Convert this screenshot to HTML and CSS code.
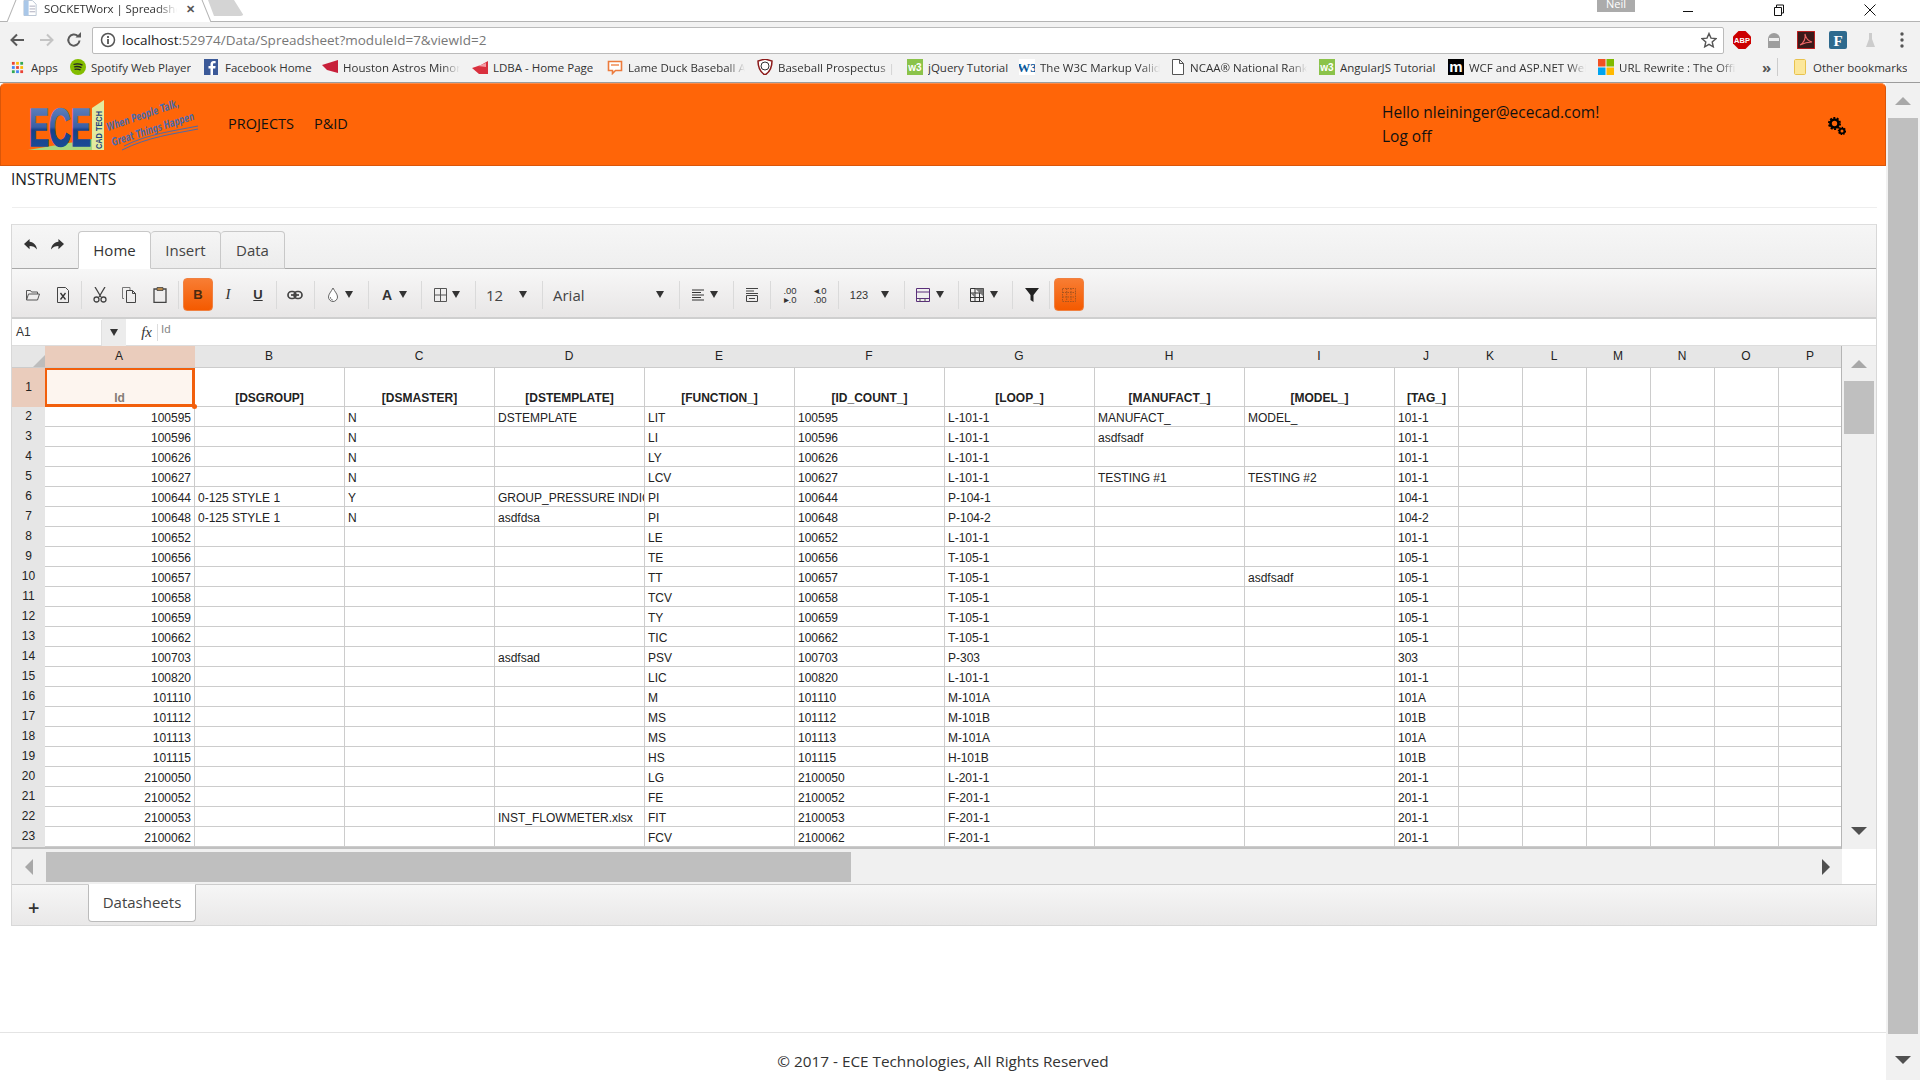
FILE: index.html
```html
<!DOCTYPE html>
<html lang="en">
<head>
<meta charset="utf-8">
<title>SOCKETWorx | Spreadsheet</title>
<link rel="stylesheet" href="styles.css">
</head>
<body>
<div class="tabstrip">
  <div class="btab">
    <svg class="ic16" viewBox="0 0 16 16"><path d="M1 0h9l4 4v12H1z" fill="#fff" stroke="#b9c4d2"/><path d="M1 0h5v16H1z" fill="#a9c7e8"/><path d="M7 6h6M7 9h6M7 12h6" stroke="#aab"/></svg>
    <span class="btab-title">SOCKETWorx | Spreadsheet</span>
    <span class="btab-x">✕</span>
  </div>
  <div class="newtab"></div>
  <div class="neil">Neil</div>
  <div class="winbtns">
    <svg class="win" viewBox="0 0 12 12"><path d="M1 7.500h10" stroke="#111"/></svg>
    <svg class="win" viewBox="0 0 12 12"><path d="M1.500 3.500h7v8h-7zM3.500 3.500v-2.500h7v8h-2" fill="none" stroke="#111"/></svg>
    <svg class="win" viewBox="0 0 12 12"><path d="M.5.5l11 11M11.500.5l-11 11" stroke="#111"/></svg>
  </div>
</div>
<div class="toolbar">
  <div class="navs">
    <svg class="nav" viewBox="0 0 16 16"><path d="M15 8H3M8 2.500L2.500 8 8 13.500" fill="none" stroke="#5a5a5a" stroke-width="2"/></svg>
    <svg class="nav" viewBox="0 0 16 16"><path d="M1 8h12M8 2.500L13.500 8 8 13.500" fill="none" stroke="#c4c4c4" stroke-width="2"/></svg>
    <svg class="nav nav-r" viewBox="0 0 16 16"><path d="M13.500 8.500A5.600 5.600 0 1 1 11.800 4" fill="none" stroke="#5a5a5a" stroke-width="2"/><path d="M9.500 5.500h5.500V0z" fill="#5a5a5a"/></svg>
  </div>
  <div class="omnibox">
    <svg class="ic16" viewBox="0 0 16 16"><circle cx="8" cy="8" r="6.500" fill="none" stroke="#555" stroke-width="1.500"/><path d="M8 7v5M8 4v2" stroke="#555" stroke-width="1.800"/></svg>
    <span class="url"><b class="host">localhost</b>:52974/Data/Spreadsheet?moduleId=7&amp;viewId=2</span>
    <svg class="ic16 star" viewBox="0 0 16 16"><path d="M8 1.500l2 4.600 5 .5-3.800 3.300 1.100 4.900L8 12.300l-4.300 2.500 1.100-4.900L1 6.600l5-.5z" fill="none" stroke="#555" stroke-width="1.400"/></svg>
  </div>
  <div class="exts">
    <svg class="ext" viewBox="0 0 18 18"><path d="M5.500 0h7L18 5.500v7L12.500 18h-7L0 12.500v-7z" fill="#c00"/><text class="t-abp" x="9" y="11.800">ABP</text></svg>
    <svg class="ext" viewBox="0 0 18 18"><path d="M3 8a6 6 0 0 1 12 0v9H3z" fill="#9d9d9d"/><path d="M4 7h10v3H4z" fill="#eee"/></svg>
    <svg class="ext" viewBox="0 0 18 18"><path d="M0 0h18v18H0z" fill="#3b1a1a" stroke="#d22" stroke-width="1.500"/><path d="M3 14c4-2 6-7 5-11 1 5 3 7 7 8-5 0-8 1-12 3z" fill="none" stroke="#e66" stroke-width="1.200"/></svg>
    <svg class="ext" viewBox="0 0 18 18"><rect width="18" height="18" rx="2" fill="#2e6a8e"/><text class="t-f" x="9" y="15">F</text></svg>
    <svg class="ext" viewBox="0 0 18 18"><path d="M8 2h3v6l3 8H5l3-8z" fill="#ccc"/></svg>
    <svg class="ext" viewBox="0 0 18 18"><circle cx="9" cy="3" r="1.700" fill="#555"/><circle cx="9" cy="9" r="1.700" fill="#555"/><circle cx="9" cy="15" r="1.700" fill="#555"/></svg>
  </div>
</div>
<div class="bookmarks">
  <a class="bm bm-apps"><svg class="fav" viewBox="0 0 14 14"><path d="M1 1h3v3H1z" fill="#ea4335"/><path d="M5.500 1h3v3h-3z" fill="#fbbc05"/><path d="M10 1h3v3h-3z" fill="#34a853"/><path d="M1 5.500h3v3H1z" fill="#4285f4"/><path d="M5.500 5.500h3v3h-3z" fill="#ea4335"/><path d="M10 5.500h3v3h-3z" fill="#fbbc05"/><path d="M1 10h3v3H1z" fill="#34a853"/><path d="M5.500 10h3v3h-3z" fill="#4285f4"/><path d="M10 10h3v3h-3z" fill="#ea4335"/></svg><span class="bm-t">Apps</span></a>
  <a class="bm bm-spot"><svg class="fav" viewBox="0 0 16 16"><circle cx="8" cy="8" r="8" fill="#84bd00"/><path d="M3.500 5.500c3-1 6-.8 9 .7M4 8c2.500-.8 5-.6 7.500.6M4.500 10.400c2-.6 4-.4 6 .5" fill="none" stroke="#222" stroke-width="1.300"/></svg><span class="bm-t">Spotify Web Player</span></a>
  <a class="bm bm-fb"><svg class="fav" viewBox="0 0 16 16"><path d="M0 0h14v16H0z" fill="#3b5998"/><path d="M9 16V9.500h2.300l.3-2.500H9V5.500c0-.8.300-1.200 1.300-1.200h1.300V2h-2C7.500 2 6.500 3.300 6.500 5.200V7H4.500v2.500h2V16z" fill="#fff"/></svg><span class="bm-t">Facebook Home</span></a>
  <a class="bm bm-astros"><svg class="fav" viewBox="0 0 16 16"><path d="M0 6l16-5v13L5 11z" fill="#c8203a"/></svg><span class="bm-t fade">Houston Astros Minor</span></a>
  <a class="bm bm-ldba"><svg class="fav" viewBox="0 0 16 16"><path d="M0 9l9-3 7-4v13H7z" fill="#d9303e"/><path d="M6 7l8-3v4z" fill="#f59ca4"/></svg><span class="bm-t">LDBA - Home Page</span></a>
  <a class="bm bm-duck"><svg class="fav" viewBox="0 0 16 16"><path d="M1.500 2.500h13v9h-6l-3 3v-3h-4z" fill="#fff" stroke="#ec7b3c" stroke-width="1.600"/><path d="M4 6h8" stroke="#ec7b3c" stroke-width="1.300"/></svg><span class="bm-t fade">Lame Duck Baseball Association</span></a>
  <a class="bm bm-bp"><svg class="fav" viewBox="0 0 16 16"><path d="M8 0l7 2c0 7-2 11-7 14C3 13 1 9 1 2z" fill="#fff" stroke="#8b1a1a" stroke-width="1.500"/><circle cx="8" cy="7" r="4" fill="none" stroke="#333"/></svg><span class="bm-t fade">Baseball Prospectus | Baseball</span></a>
  <a class="bm bm-jq"><svg class="fav" viewBox="0 0 16 16"><path d="M0 0h16v16H0z" fill="#8bc34a"/><text class="t-w3" x="8" y="12">w3</text></svg><span class="bm-t">jQuery Tutorial</span></a>
  <a class="bm bm-w3"><svg class="fav" viewBox="0 0 16 16"><path d="M0 0h16v16H0z" fill="#fff"/><text class="t-w3c" x="8" y="13">W3</text></svg><span class="bm-t fade">The W3C Markup Validation</span></a>
  <a class="bm bm-ncaa"><svg class="fav-s" viewBox="0 0 12 16"><path d="M.5.500h7l4 4v11H.5zM7.500.500v4h4" fill="#fff" stroke="#555"/></svg><span class="bm-t fade">NCAA® National Rankings Index</span></a>
  <a class="bm bm-ang"><svg class="fav" viewBox="0 0 16 16"><path d="M0 0h16v16H0z" fill="#8bc34a"/><text class="t-w3" x="8" y="12">w3</text></svg><span class="bm-t">AngularJS Tutorial</span></a>
  <a class="bm bm-wcf"><svg class="fav" viewBox="0 0 16 16"><path d="M0 0h16v16H0z" fill="#000"/><text class="t-m" x="8" y="13">m</text></svg><span class="bm-t fade">WCF and ASP.NET Web API</span></a>
  <a class="bm bm-url"><svg class="fav" viewBox="0 0 16 16"><path d="M0 0h7.500v7.500H0z" fill="#f25022"/><path d="M8.500 0H16v7.500H8.500z" fill="#7fba00"/><path d="M0 8.500h7.500V16H0z" fill="#00a4ef"/><path d="M8.500 8.500H16V16H8.500z" fill="#ffb900"/></svg><span class="bm-t fade">URL Rewrite : The Official</span></a>
  <span class="bm-more">»</span>
  <span class="bm-sep"></span>
  <a class="bm bm-other"><svg class="fav-s" viewBox="0 0 12 16"><path d="M.5 1.500C.5 1 1 .5 1.500.5h9c.5 0 1 .5 1 1v13c0 .5-.5 1-1 1h-9c-.5 0-1-.5-1-1z" fill="#fce79a" stroke="#e8c24e"/></svg><span class="bm-t">Other bookmarks</span></a>
</div>

<div class="viewport">
  <div class="page">
    <header class="appbar">
      <svg class="logo" viewBox="0 0 172 52">
        <defs><linearGradient id="ece" x1="0" y1="0" x2="0" y2="1"><stop offset="0" stop-color="#6f8fc6"/><stop offset=".5" stop-color="#3a5fa6"/><stop offset=".55" stop-color="#14418c"/><stop offset="1" stop-color="#1f4f9a"/></linearGradient></defs>
        <path d="M0 51L64 40v11z" fill="#a9d67e"/>
        <path d="M64 51V9L76 1v50z" fill="#e2eb9f"/>
        <text class="logo-ece" x="1" y="47" textLength="62" lengthAdjust="spacingAndGlyphs" fill="url(#ece)" stroke="url(#ece)">ECE</text>
        <text class="logo-cad" transform="translate(74 50) rotate(-90)" textLength="38" lengthAdjust="spacingAndGlyphs">CAD TECH</text>
        <text class="logo-tag" transform="translate(80 32) rotate(-19)" textLength="76" lengthAdjust="spacingAndGlyphs">When People Talk,</text>
        <text class="logo-tag" transform="translate(85 47) rotate(-18)" textLength="86" lengthAdjust="spacingAndGlyphs">Great Things Happen</text>
        <path d="M94 51C120 38 145 35 170 30M96 47C120 35 145 32 170 27" fill="none" stroke="#4d6aa8" stroke-width="1"/>
      </svg>
      <nav class="appnav"><a>PROJECTS</a><a>P&amp;ID</a></nav>
      <div class="user"><div>Hello nleininger@ececad.com!</div><div>Log off</div></div>
      <svg class="gears" viewBox="0 0 18 18">
        <circle cx="6.500" cy="6.500" r="4" fill="none" stroke="#000" stroke-width="2.600"/>
        <circle cx="6.500" cy="6.500" r="5.600" fill="none" stroke="#000" stroke-width="1.800" stroke-dasharray="2 1.500"/>
        <circle cx="14" cy="14" r="2.400" fill="none" stroke="#000" stroke-width="1.800"/>
        <circle cx="14" cy="14" r="3.600" fill="none" stroke="#000" stroke-width="1.300" stroke-dasharray="1.500 1.200"/>
      </svg>
    </header>
    <main class="content">
      <h1 class="title">INSTRUMENTS</h1>
      <div class="rule"></div>
      <section class="sheet">
        <div class="rtabs">
          <svg class="ur" viewBox="0 0 16 14"><path d="M7 1L1 6.500 7 12V8.500c3.500 0 6 1 8 4-.5-5-3.500-8-8-8.500z" fill="#333"/></svg>
          <svg class="ur" viewBox="0 0 16 14"><path d="M9 1l6 5.500L9 12V8.500c-3.500 0-6 1-8 4 .5-5 3.500-8 8-8.500z" fill="#333"/></svg>
          <a class="rtab on">Home</a><a class="rtab">Insert</a><a class="rtab">Data</a>
        </div>
        <div class="ribbon">
          <div class="grp">
            <span class="ti"><svg class="i" viewBox="0 0 16 16"><path d="M1.500 13V3.500h4l1 1.500h6v2M1.500 13l2-6h11l-2 6z" fill="none" stroke="#555"/></svg></span>
            <span class="ti"><svg class="i" viewBox="0 0 16 16"><path d="M2.500.5h8l3 3v12h-11z" fill="none" stroke="#444"/><path d="M5.500 6l5 6.500M10.500 6l-5 6.500" stroke="#333" stroke-width="1.300"/></svg></span>
          </div>
          <div class="grp">
            <span class="ti"><svg class="i" viewBox="0 0 16 16"><path d="M3 0l6 10M13 0L7 10" stroke="#444" stroke-width="1.300"/><circle cx="4.500" cy="12.500" r="2.500" fill="none" stroke="#444" stroke-width="1.300"/><circle cx="11.500" cy="12.500" r="2.500" fill="none" stroke="#444" stroke-width="1.300"/></svg></span>
            <span class="ti"><svg class="i" viewBox="0 0 16 16"><path d="M2 11.500H.5V.5H8V3" fill="none" stroke="#777"/><path d="M4.500 3.500h6l3 3v9h-9zM10.500 3.500v3h3" fill="none" stroke="#444"/></svg></span>
            <span class="ti"><svg class="i" viewBox="0 0 16 16"><path d="M5 2H2v13.500h12V2h-3" fill="none" stroke="#444" stroke-width="1.300"/><path d="M5 .5h6v3H5z" fill="#b98a4a" stroke="#444" stroke-width=".8"/></svg></span>
          </div>
          <div class="grp bold-grp">
            <span class="ti"><span class="obtn fmt-b">B</span></span>
            <span class="ti fmt-i">I</span>
            <span class="ti fmt-u">U</span>
          </div>
          <div class="grp link-grp">
            <span class="ti"><svg class="i" viewBox="0 0 16 16"><rect x="1" y="4.500" width="8" height="7" rx="3.500" fill="none" stroke="#444" stroke-width="1.700"/><rect x="7" y="4.500" width="8" height="7" rx="3.500" fill="none" stroke="#444" stroke-width="1.700"/><path d="M4 8h8" stroke="#444" stroke-width="1.700"/></svg></span>
          </div>
          <div class="grp dd g-fill"><svg class="i" viewBox="0 0 16 16"><path d="M8 1c-2 4-4.500 6-4.500 9a4.500 4.500 0 0 0 9 0C12.500 7 10 5 8 1z" fill="#fff" stroke="#666"/><path d="M5.500 10a2.500 2.500 0 0 0 2.500 3" fill="none" stroke="#888"/></svg><i class="caret"></i></div>
          <div class="grp dd g-a"><span class="fmt-a">A</span><i class="caret"></i></div>
          <div class="grp dd g-b"><svg class="i" viewBox="0 0 16 16"><path d="M2.500 1.500h12v13h-12zM8.500 1.500v13M2.500 8h12" fill="none" stroke="#555"/></svg><i class="caret"></i></div>
          <div class="grp dd g-size"><span class="fs">12</span><i class="caret"></i></div>
          <div class="grp dd g-font"><span class="ff">Arial</span><i class="caret"></i></div>
          <div class="grp dd g-al"><svg class="i" viewBox="0 0 16 16"><path d="M2 3h12M2 5.500h9M2 8h12M2 10.500h9M2 13h12" stroke="#333"/></svg><i class="caret"></i></div>
          <div class="grp g-one"><svg class="i" viewBox="0 0 16 16"><path d="M2 1.500h12M2 4h8M2 6.500h12" stroke="#444"/><path d="M2.500 8.500h11v6h-11zM5 11.500h6" fill="none" stroke="#444"/></svg></div>
          <div class="grp g-dec">
            <span class="ti"><span class="dec"><span>.00</span><span>▸.0</span></span></span>
            <span class="ti"><span class="dec"><span>◂.0</span><span>.00</span></span></span>
          </div>
          <div class="grp dd g-num"><span class="num">123</span><i class="caret"></i></div>
          <div class="grp dd g-f1"><svg class="i" viewBox="0 0 16 16"><path d="M1.500 1.500h13v13h-13zM1.500 5h13M1.500 11.500h13" fill="none" stroke="#5a2f7a"/><path d="M5 11.500V14.500M10 11.500v3" stroke="#555"/></svg><i class="caret"></i></div>
          <div class="grp dd g-f2"><svg class="i" viewBox="0 0 16 16"><path d="M1.500 1.500h13v13h-13zM1.500 6h13M1.500 10.500h13M6 1.500v13M10.500 1.500v13" fill="none" stroke="#333"/><path d="M6 1.500l8.500 8v-8zM1.500 6l4.500 4.500v-4.500z" fill="#777"/></svg><i class="caret"></i></div>
          <div class="grp g-filter"><svg class="i" viewBox="0 0 16 16"><path d="M1 1h14L9.500 8v7l-3-2V8z" fill="#222"/></svg></div>
          <span class="obtn"><svg class="i" viewBox="0 0 16 16"><path d="M1.500 1.500h13v13h-13zM1.500 5.500h13M1.500 10h13M5.700 1.500v13M10 1.500v13" fill="none" stroke="#a8541e" stroke-dasharray="1.500 1"/></svg></span>
        </div>
        <div class="formula">
          <div class="namebox">A1</div>
          <div class="namedd"><i class="caret"></i></div>
          <div class="fx">fx</div>
          <div class="fval">Id</div>
        </div>
        <div class="gridarea">
          <div class="gridview">
            <table class="grid">
              <colgroup><col class="c-r"><col class="c-w"><col class="c-w"><col class="c-w"><col class="c-w"><col class="c-w"><col class="c-w"><col class="c-w"><col class="c-w"><col class="c-w"><col class="c-n"><col class="c-n"><col class="c-n"><col class="c-n"><col class="c-n"><col class="c-n"><col class="c-n"></colgroup>
              <thead><tr><th class="corner"><i class="tri"></i></th><th class="sel">A</th><th>B</th><th>C</th><th>D</th><th>E</th><th>F</th><th>G</th><th>H</th><th>I</th><th>J</th><th>K</th><th>L</th><th>M</th><th>N</th><th>O</th><th>P</th></tr></thead>
              <tbody>
                <tr class="head"><th class="sel">1</th><td class="a1">Id</td><td>[DSGROUP]</td><td>[DSMASTER]</td><td>[DSTEMPLATE]</td><td>[FUNCTION_]</td><td>[ID_COUNT_]</td><td>[LOOP_]</td><td>[MANUFACT_]</td><td>[MODEL_]</td><td>[TAG_]</td><td></td><td></td><td></td><td></td><td></td><td></td></tr>
                <tr><th>2</th><td>100595</td><td></td><td>N</td><td>DSTEMPLATE</td><td>LIT</td><td>100595</td><td>L-101-1</td><td>MANUFACT_</td><td>MODEL_</td><td>101-1</td><td></td><td></td><td></td><td></td><td></td><td></td></tr>
                <tr><th>3</th><td>100596</td><td></td><td>N</td><td></td><td>LI</td><td>100596</td><td>L-101-1</td><td>asdfsadf</td><td></td><td>101-1</td><td></td><td></td><td></td><td></td><td></td><td></td></tr>
                <tr><th>4</th><td>100626</td><td></td><td>N</td><td></td><td>LY</td><td>100626</td><td>L-101-1</td><td></td><td></td><td>101-1</td><td></td><td></td><td></td><td></td><td></td><td></td></tr>
                <tr><th>5</th><td>100627</td><td></td><td>N</td><td></td><td>LCV</td><td>100627</td><td>L-101-1</td><td>TESTING #1</td><td>TESTING #2</td><td>101-1</td><td></td><td></td><td></td><td></td><td></td><td></td></tr>
                <tr><th>6</th><td>100644</td><td>0-125 STYLE 1</td><td>Y</td><td>GROUP_PRESSURE INDICATOR</td><td>PI</td><td>100644</td><td>P-104-1</td><td></td><td></td><td>104-1</td><td></td><td></td><td></td><td></td><td></td><td></td></tr>
                <tr><th>7</th><td>100648</td><td>0-125 STYLE 1</td><td>N</td><td>asdfdsa</td><td>PI</td><td>100648</td><td>P-104-2</td><td></td><td></td><td>104-2</td><td></td><td></td><td></td><td></td><td></td><td></td></tr>
                <tr><th>8</th><td>100652</td><td></td><td></td><td></td><td>LE</td><td>100652</td><td>L-101-1</td><td></td><td></td><td>101-1</td><td></td><td></td><td></td><td></td><td></td><td></td></tr>
                <tr><th>9</th><td>100656</td><td></td><td></td><td></td><td>TE</td><td>100656</td><td>T-105-1</td><td></td><td></td><td>105-1</td><td></td><td></td><td></td><td></td><td></td><td></td></tr>
                <tr><th>10</th><td>100657</td><td></td><td></td><td></td><td>TT</td><td>100657</td><td>T-105-1</td><td></td><td>asdfsadf</td><td>105-1</td><td></td><td></td><td></td><td></td><td></td><td></td></tr>
                <tr><th>11</th><td>100658</td><td></td><td></td><td></td><td>TCV</td><td>100658</td><td>T-105-1</td><td></td><td></td><td>105-1</td><td></td><td></td><td></td><td></td><td></td><td></td></tr>
                <tr><th>12</th><td>100659</td><td></td><td></td><td></td><td>TY</td><td>100659</td><td>T-105-1</td><td></td><td></td><td>105-1</td><td></td><td></td><td></td><td></td><td></td><td></td></tr>
                <tr><th>13</th><td>100662</td><td></td><td></td><td></td><td>TIC</td><td>100662</td><td>T-105-1</td><td></td><td></td><td>105-1</td><td></td><td></td><td></td><td></td><td></td><td></td></tr>
                <tr><th>14</th><td>100703</td><td></td><td></td><td>asdfsad</td><td>PSV</td><td>100703</td><td>P-303</td><td></td><td></td><td>303</td><td></td><td></td><td></td><td></td><td></td><td></td></tr>
                <tr><th>15</th><td>100820</td><td></td><td></td><td></td><td>LIC</td><td>100820</td><td>L-101-1</td><td></td><td></td><td>101-1</td><td></td><td></td><td></td><td></td><td></td><td></td></tr>
                <tr><th>16</th><td>101110</td><td></td><td></td><td></td><td>M</td><td>101110</td><td>M-101A</td><td></td><td></td><td>101A</td><td></td><td></td><td></td><td></td><td></td><td></td></tr>
                <tr><th>17</th><td>101112</td><td></td><td></td><td></td><td>MS</td><td>101112</td><td>M-101B</td><td></td><td></td><td>101B</td><td></td><td></td><td></td><td></td><td></td><td></td></tr>
                <tr><th>18</th><td>101113</td><td></td><td></td><td></td><td>MS</td><td>101113</td><td>M-101A</td><td></td><td></td><td>101A</td><td></td><td></td><td></td><td></td><td></td><td></td></tr>
                <tr><th>19</th><td>101115</td><td></td><td></td><td></td><td>HS</td><td>101115</td><td>H-101B</td><td></td><td></td><td>101B</td><td></td><td></td><td></td><td></td><td></td><td></td></tr>
                <tr><th>20</th><td>2100050</td><td></td><td></td><td></td><td>LG</td><td>2100050</td><td>L-201-1</td><td></td><td></td><td>201-1</td><td></td><td></td><td></td><td></td><td></td><td></td></tr>
                <tr><th>21</th><td>2100052</td><td></td><td></td><td></td><td>FE</td><td>2100052</td><td>F-201-1</td><td></td><td></td><td>201-1</td><td></td><td></td><td></td><td></td><td></td><td></td></tr>
                <tr><th>22</th><td>2100053</td><td></td><td></td><td>INST_FLOWMETER.xlsx</td><td>FIT</td><td>2100053</td><td>F-201-1</td><td></td><td></td><td>201-1</td><td></td><td></td><td></td><td></td><td></td><td></td></tr>
                <tr><th>23</th><td>2100062</td><td></td><td></td><td></td><td>FCV</td><td>2100062</td><td>F-201-1</td><td></td><td></td><td>201-1</td><td></td><td></td><td></td><td></td><td></td><td></td></tr>
                <tr><th></th><td></td><td></td><td></td><td></td><td></td><td></td><td></td><td></td><td></td><td></td><td></td><td></td><td></td><td></td><td></td><td></td></tr>
              </tbody>
            </table>
          </div>
          <div class="vscroll">
            <i class="arr up"></i>
            <div class="vthumb"></div>
            <i class="arr down"></i>
          </div>
        </div>
        <div class="hrow">
          <div class="hscroll">
            <i class="arr left"></i>
            <div class="hthumb"></div>
            <i class="arr right"></i>
          </div>
        </div>
        <div class="stabs">
          <span class="plus">+</span>
          <a class="stab">Datasheets</a>
        </div>
      </section>
    </main>
    <footer class="foot">© 2017 - ECE Technologies, All Rights Reserved</footer>
  </div>
  <div class="pscroll">
    <i class="arr up pup"></i>
    <div class="pthumb"></div>
    <i class="arr down pdown"></i>
  </div>
</div>
</body>
</html>
```
FILE: styles.css
```css
* { box-sizing: border-box; }
html, body { margin: 0; padding: 0; width: 1920px; height: 1080px; overflow: hidden; background: #fff; }
body { font-family: "Open Sans", "Noto Sans", sans-serif; color: #222; display: flex; flex-direction: column; }
svg { display: block; flex: none; }
a { color: inherit; text-decoration: none; }

/* browser chrome */
.tabstrip { height: 22px; flex: none; display: flex; align-items: flex-start; background: #fff; border-bottom: 1px solid #b4b4b4; }
.btab { width: 204px; height: 22px; margin-left: 7px; display: flex; align-items: center; padding: 0 0 6px 16px; background: #fff; gap: 6px; position: relative; overflow: hidden; }
.btab::before, .btab::after { content: ""; position: absolute; top: -2px; width: 1px; height: 26px; background: #b4b4b4; }
.btab::before { left: 4px; transform: rotate(22deg); }
.btab::after { right: 4px; transform: rotate(-22deg); }
.btab .ic16 { width: 15px; height: 16px; }
.btab-title { font-size: 11.500px; letter-spacing: -.1px; width: 133px; white-space: nowrap; overflow: hidden; color: #333; -webkit-mask-image: linear-gradient(90deg, #000 85%, transparent); mask-image: linear-gradient(90deg, #000 85%, transparent); }
.btab-x { font-size: 11px; color: #555; font-weight: 700; margin-left: 3px; }
.newtab { width: 36px; height: 16px; margin-left: -3px; background: #d4d4d4; border-radius: 0 0 4px 4px; clip-path: polygon(0 0, 26px 0, 100% 100%, 6px 100%); }
.neil { width: 38px; height: 12px; margin-left: 1353px; background: #ababab; color: #fff; font-size: 11px; line-height: 8px; text-align: center; overflow: hidden; }
.winbtns { display: flex; margin-left: 47px; gap: 79px; padding-top: 4px; }
.win { width: 12px; height: 12px; }

.toolbar { height: 32px; flex: none; display: flex; align-items: center; background: #f2f2f2; padding-top: 4px; }
.navs { display: flex; width: 92px; padding-left: 9px; gap: 14px; }
.nav { width: 16px; height: 16px; }
.nav-r { margin-left: -3px; }
.omnibox { width: 1632px; height: 27px; background: #fff; border: 1px solid #bbb; border-radius: 2px; display: flex; align-items: center; padding: 0 6px 0 7px; }
.ic16 { width: 16px; height: 16px; }
.url { margin-left: 6px; font-size: 13.500px; color: #777; flex: 1; white-space: nowrap; }
.host { font-weight: 400; color: #222; }
.exts { display: flex; margin-left: 9px; gap: 14px; }
.ext { width: 18px; height: 18px; }
.t-abp { font: 700 7.500px "Liberation Sans", sans-serif; fill: #fff; text-anchor: middle; }
.t-f { font: 700 15px "Liberation Serif", serif; fill: #fff; text-anchor: middle; }
.t-w3 { font: 700 10px "Liberation Sans", sans-serif; fill: #fff; text-anchor: middle; }
.t-w3c { font: 700 13px "Liberation Serif", serif; fill: #0a5a9c; text-anchor: middle; }
.t-m { font: 700 15px "Liberation Sans", sans-serif; fill: #fff; text-anchor: middle; }

.bookmarks { height: 29px; flex: none; display: flex; align-items: center; background: #f2f2f2; border-bottom: 1px solid #9c9c9c; padding: 0 0 2px 11px; font-size: 11.500px; color: #333; }
.bm { display: flex; align-items: center; gap: 5px; flex: none; }
.fav { width: 16px; height: 16px; flex: none; }
.fav-s { width: 12px; height: 16px; flex: none; }
.bm-t { white-space: nowrap; overflow: hidden; }
.fade { flex: 1; margin-right: 12px; -webkit-mask-image: linear-gradient(90deg, #000 85%, transparent); mask-image: linear-gradient(90deg, #000 85%, transparent); }
.bm-apps { width: 59px; gap: 7px; }
.bm-apps .fav { width: 13px; height: 13px; }
.bm-spot { width: 134px; }
.bm-fb { width: 118px; }
.bm-astros { width: 150px; }
.bm-ldba { width: 135px; }
.bm-duck { width: 150px; }
.bm-bp { width: 150px; }
.bm-jq { width: 112px; }
.bm-w3 { width: 153px; }
.bm-ncaa { width: 147px; gap: 6px; }
.bm-ang { width: 129px; }
.bm-wcf { width: 150px; }
.bm-url { width: 150px; }
.bm-more { width: 15px; margin-left: 14px; font-size: 15px; color: #555; font-weight: 700; line-height: 1; }
.bm-sep { width: 1px; height: 18px; background: #ccc; margin: 0 16px 0 0; }
.bm-other { gap: 7px; }

/* page */
.viewport { height: 997px; flex: none; display: flex; }
.page { width: 1886px; flex: none; display: flex; flex-direction: column; background: #fff; }
.appbar { height: 83px; flex: none; display: flex; align-items: center; background: #ff6508; border: 1px solid #d9560a; border-top-color: #ff8a45; border-radius: 5px 5px 0 0; padding: 0 39px 2px 27px; color: #111; }
.logo { width: 172px; height: 52px; margin-top: 2px; }
.logo-ece { font: 700 54px "Liberation Sans", sans-serif; stroke-width: 1.500; }
.logo-cad { font: 700 9.500px "Liberation Sans", sans-serif; fill: #1c3f7e; }
.logo-tag { font: italic 700 11px "DejaVu Sans", sans-serif; fill: #4d6aa8; }
.appnav { margin-left: 28px; display: flex; gap: 20px; font-size: 14.500px; }
.user { margin-left: auto; width: 446px; font-size: 15.500px; line-height: 24px; }
.gears { width: 18px; height: 18px; margin-top: 4px; }

.content { flex: 1; padding: 0 9px 0 11px; }
.title { margin: 0; font-size: 15.500px; font-weight: 400; line-height: 26px; color: #222; }
.rule { height: 1px; background: #eee; margin-top: 15px; margin-left: 1px; }
.sheet { margin-top: 16px; height: 702px; border: 1px solid #d8d8d8; border-top-color: #ddd; display: flex; flex-direction: column; background: #fff; }

.rtabs { height: 44px; flex: none; display: flex; align-items: flex-end; background: linear-gradient(#f6f6f6, #efefef); border-bottom: 1px solid #a8a8a8; padding-left: 11px; }
.ur { width: 15px; height: 13px; margin: 0 12px 17px 0; }
.rtab { height: 38px; margin-bottom: -1px; padding: 0 16px; display: flex; align-items: center; font-size: 15px; color: #444; background: linear-gradient(#f5f5f5, #ececec); border: 1px solid #c8c8c8; border-left-width: 0; border-radius: 4px 4px 0 0; }
.rtab.on { background: #fff; color: #333; border-left-width: 1px; border-bottom-color: #fff; margin-left: 1px; width: 73px; justify-content: center; padding: 0; }
.rtab:nth-child(4) { width: 70px; justify-content: center; padding: 0; }
.rtab:nth-child(5) { width: 64px; justify-content: center; padding: 0; }

.ribbon { height: 50px; flex: none; display: flex; align-items: center; background: linear-gradient(#f7f7f7, #e8e6e6); border-bottom: 2px solid #cfcfcf; padding: 3px 0 0 3px; }
.grp { height: 28px; display: flex; align-items: center; padding: 0 3px; border-right: 1px solid #dadada; flex: none; }
.ti { width: 30px; height: 33px; display: flex; align-items: center; justify-content: center; flex: none; }
.i { width: 16px; height: 16px; }
.obtn { width: 30px; height: 33px; display: flex; align-items: center; justify-content: center; background: linear-gradient(#f87d33, #f45a00); border: 1px solid #f08040; border-radius: 4px; flex: none; }
.ribbon > .obtn { margin-left: 4px; }
.bold-grp { padding-left: 4px; }
.link-grp { padding-right: 4px; }
.fmt-b { font: 700 13px "Liberation Sans", sans-serif; color: #4a2a10; }
.fmt-i { font: italic 400 15px "Liberation Serif", serif; color: #333; }
.fmt-u { font: 700 13px "Liberation Sans", sans-serif; color: #333; text-decoration: underline; }
.fmt-a { width: 16px; font: 700 14px "Liberation Sans", sans-serif; color: #333; text-align: center; }
.caret { width: 0; height: 0; border-left: 4px solid transparent; border-right: 4px solid transparent; border-top: 7px solid #333; flex: none; display: block; }
.dd { padding: 0 15px 0 10px; gap: 4px; }
.g-a, .g-f1, .g-f2 { padding-right: 14px; }
.g-f1, .g-f2 { gap: 5px; }
.fs { width: 16px; font-size: 15px; color: #444; margin-right: 13px; }
.ff { width: 99px; font-size: 15px; color: #444; }
.num { width: 20px; font: 11px "Liberation Sans", sans-serif; color: #333; margin-right: 8px; text-align: center; }
.g-one { padding: 0 10px; }
.g-dec { padding: 0 3px 0 4px; }
.dec { display: flex; flex-direction: column; align-items: center; font: 9.500px/9px "Liberation Sans", sans-serif; color: #333; }
.g-filter { padding: 0 9px 0 11px; }

.formula { height: 27px; flex: none; display: flex; align-items: center; background: #fff; border-bottom: 1px solid #ddd; }
.namebox { width: 90px; height: 25px; padding: 3px 0 0 4px; font: 12px "Liberation Sans", sans-serif; color: #333; border: 1px solid #e0e0e0; border-width: 0 1px 0 0; line-height: 18px; }
.namedd { width: 24px; height: 27px; background: #ececec; display: flex; align-items: center; justify-content: center; }
.fx { width: 32px; font: italic 400 15px "Liberation Serif", serif; color: #333; text-align: right; padding-right: 5px; border-right: 1px solid #ddd; height: 17px; line-height: 17px; }
.fval { padding: 0 0 7px 3px; font: 11.500px "Liberation Sans", sans-serif; color: #888; }

.gridarea { height: 503px; flex: none; display: flex; }
.gridview { width: 1830px; height: 503px; overflow: hidden; border-right: 1px solid #b5b5b5; border-bottom: 2px solid #c0c0c0; flex: none; }
.grid { width: 1829px; border-collapse: separate; border-spacing: 0; table-layout: fixed; font: 12px "Liberation Sans", sans-serif; color: #222; }
.c-r { width: 33px; }
.c-w { width: 150px; }
.c-n { width: 64px; }
.grid thead th { height: 22px; background: #e6e6e6; font-weight: 400; font-size: 12px; border-bottom: 1px solid #ccc; padding: 0 2px 2px 0; line-height: 16px; }
.grid thead th.corner { background: #e6e6e6; position: relative; padding: 0; }
.tri { position: absolute; right: 0; bottom: 0; width: 0; height: 0; border-left: 12px solid transparent; border-bottom: 12px solid #bdbdbd; }
.grid thead th.sel, .grid tbody th.sel { background: #eaccbc; }
.grid tbody th { height: 20px; background: #e6e6e6; font-weight: 400; font-size: 12px; padding: 0 0 2px; text-align: center; line-height: 16px; vertical-align: middle; }
.grid td { height: 20px; padding: 0 3px 0; border-right: 1px solid #ccc; border-bottom: 1px solid #ccc; white-space: nowrap; overflow: hidden; vertical-align: bottom; line-height: 15px; }
.grid td:nth-child(2) { text-align: right; }
.head td, .head th { height: 39px; }
.head td { text-align: center; font-weight: 700; color: #222; }
.grid .head td:nth-child(2) { text-align: center; }
.grid td.a1 { background: #fdf5ef; color: #857c75; overflow: visible; position: relative; box-shadow: inset 0 0 0 2px #f25f0c; border-color: #f25f0c; }
.a1::after { content: ""; position: absolute; right: -3px; bottom: -3px; width: 5px; height: 5px; border-radius: 50%; background: #f25f0c; }

.vscroll { width: 34px; flex: none; background: #f0f0f0; display: flex; flex-direction: column; align-items: center; }
.arr { display: block; width: 0; height: 0; flex: none; }
.up { border-left: 8px solid transparent; border-right: 8px solid transparent; border-bottom: 8px solid #a8a8a8; }
.down { border-left: 8px solid transparent; border-right: 8px solid transparent; border-top: 8px solid #505050; }
.left { border-top: 8px solid transparent; border-bottom: 8px solid transparent; border-right: 8px solid #a8a8a8; }
.right { border-top: 8px solid transparent; border-bottom: 8px solid transparent; border-left: 8px solid #505050; }
.vscroll .up { margin-top: 14px; }
.vthumb { width: 30px; height: 53px; background: #bfbfbf; margin-top: 13px; }
.vscroll .down { margin-top: auto; margin-bottom: 14px; }
.hrow { height: 35px; flex: none; display: flex; background: #fff; }
.hscroll { width: 1830px; height: 35px; background: #f0f0f0; display: flex; align-items: center; padding: 0 12px 0 13px; flex: none; }
.hthumb { width: 805px; height: 30px; background: #bfbfbf; margin-left: 13px; }
.hscroll .right { margin-left: auto; }
.stabs { flex: 1; display: flex; align-items: flex-start; background: linear-gradient(#f6f6f6, #e9e8e8); border-top: 1px solid #ccc; }
.plus { width: 76px; padding-left: 16px; font-size: 20px; line-height: 20px; margin-top: 13px; color: #333; font-weight: 600; }
.stab { width: 108px; height: 38px; margin-top: -1px; padding-bottom: 2px; background: #fff; border: 1px solid #bbb; border-top-color: #fff; border-radius: 0 0 4px 4px; display: flex; align-items: center; justify-content: center; font-size: 15px; color: #444; }

.foot { height: 48px; flex: none; border-top: 1px solid #e4e4e4; text-align: center; font-size: 15.300px; line-height: 56px; color: #333; }

.pscroll { width: 34px; flex: none; background: #f1f1f1; display: flex; flex-direction: column; align-items: center; padding-top: 14px; }
.pup { margin-bottom: 13px; }
.pthumb { width: 30px; height: 916px; background: #bfbfbf; flex: none; }
.pdown { margin-top: 22px; }
```
